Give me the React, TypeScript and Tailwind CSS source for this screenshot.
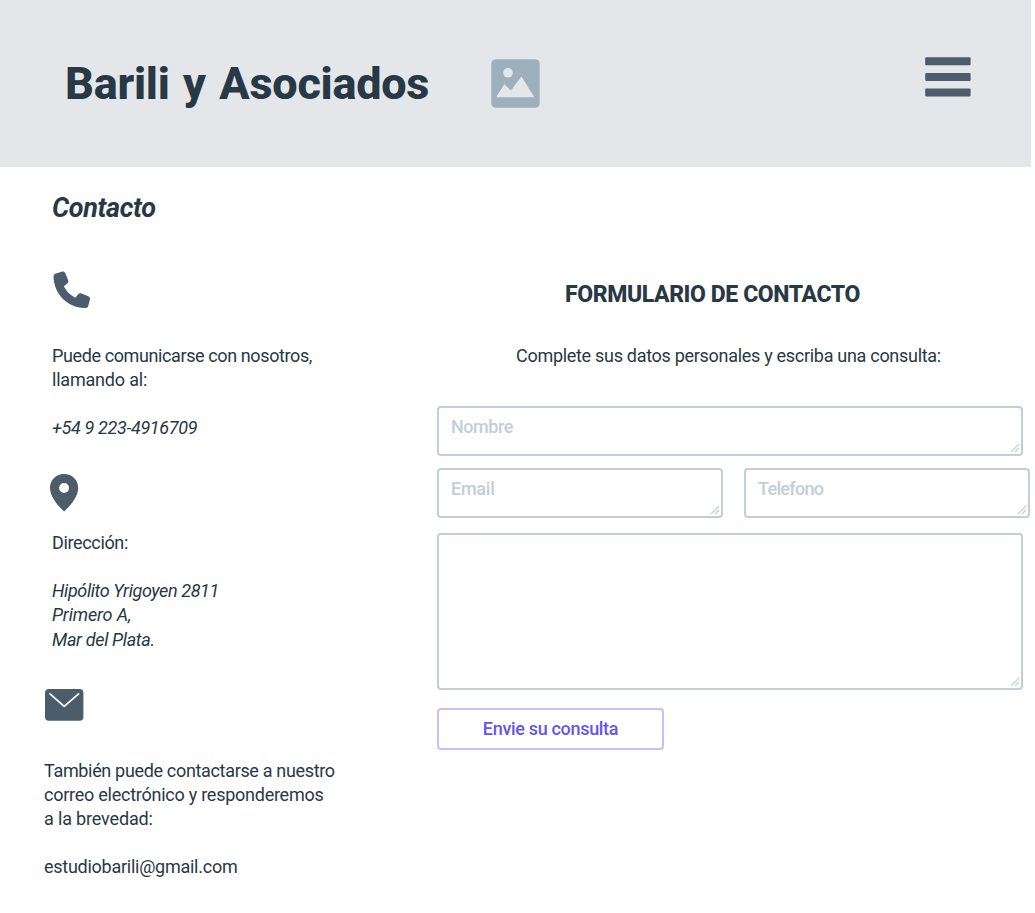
import type { ReactNode } from "react";

function Line({ className = "", children }: { className?: string; children: ReactNode }) {
  return <p className={`h-6 whitespace-nowrap text-[18px] leading-6 ${className}`}>{children}</p>;
}

function ImageIcon() {
  return (
    <svg className="block h-[49px] w-[49px]" viewBox="0 0 49 49">
      <rect x="0.3" y="0.3" width="48.4" height="48.4" rx="4.5" fill="#9fb0bd" />
      <circle cx="17" cy="13.8" r="4.8" fill="#e3e7ea" />
      <path d="M5.6 37.2 L13.4 25.2 L20 31.6 L30.4 17.6 L42.8 37.2 Q43 38.2 42 38.2 H6.4 Q5.3 38.2 5.6 37.2 Z" fill="#e3e7ea" />
    </svg>
  );
}

function MenuIcon() {
  return (
    <svg className="block h-10 w-[46px]" viewBox="0 0 46 40">
      <g fill="#4b5d6b">
        <rect x="0.2" y="0.3" width="45.4" height="8" rx="0.8" />
        <rect x="0.2" y="15.9" width="45.4" height="8" rx="0.8" />
        <rect x="0.2" y="31.4" width="45.4" height="8" rx="0.8" />
      </g>
    </svg>
  );
}

function PhoneIcon() {
  return (
    <svg className="block h-[37px] w-[38px]" viewBox="-8 -8 526 512">
      <path
        fill="#4b5d6b"
        transform="scale(0.985)"
        d="M164.9 24.6c-7.7-18.6-28-28.5-47.4-23.2l-88 24C12.1 30.2 0 46 0 64C0 311.4 200.6 512 448 512c18 0 33.8-12.1 38.6-29.5l24-88c5.3-19.4-4.6-39.7-23.2-47.4l-96-40c-16.3-6.8-35.2-2.1-46.3 11.6L304.7 368C234.3 334.7 177.3 277.7 144 207.3L193.3 167c13.7-11.2 18.4-30 11.6-46.3l-40-96z"
      />
    </svg>
  );
}

function PinIcon() {
  return (
    <svg className="block h-[38px] w-[29px]" viewBox="0 0 29 38">
      <path
        fill="#4b5d6b"
        fillRule="evenodd"
        d="M14.1 0 C6.1 0 0 6 0 13.7 C0 21.8 6.2 30 14.1 37.4 C22 30 28.2 21.8 28.2 13.7 C28.2 6 22.1 0 14.1 0 Z M14.1 9 a5 5 0 1 1 0 10 a5 5 0 1 1 0 -10 Z"
      />
    </svg>
  );
}

function MailIcon() {
  return (
    <svg className="block h-8 w-[39px]" viewBox="0 0 39 32">
      <rect x="0" y="0.1" width="38.4" height="31.6" rx="3.8" fill="#4b5d6b" />
      <path d="M5 4.8 L19.2 17.4 L33.6 4.8" fill="none" stroke="#fff" strokeWidth="1.7" strokeLinecap="round" strokeLinejoin="round" />
    </svg>
  );
}

function Field({ className = "", children }: { className?: string; children?: ReactNode }) {
  return (
    <div className={`relative rounded-[4px] border-2 border-[#c2ced9] bg-white pl-3 pt-[7px] font-medium text-[#c2ced9] ${className}`}>
      {children}
      <svg className="absolute right-[1px] bottom-[1px] h-[10px] w-[10px]" viewBox="0 0 10 10">
        <path d="M1 9 L9 1 M5 9 L9 5" stroke="#c2ced9" strokeWidth="1.2" />
      </svg>
    </div>
  );
}

export default function App() {
  return (
    <div className="h-[913px] w-full overflow-hidden bg-white font-['Roboto',sans-serif] font-[450] text-[#283845]">
      <header className="flex h-[167px] w-[1031px] items-start bg-[#e3e7ea] pl-[65px]">
        <h1 className="mt-[58px] w-[426px] whitespace-nowrap text-[45px] font-extrabold leading-[52px] tracking-[-0.25px] [word-spacing:2.5px]">
          Barili y Asociados
        </h1>
        <div className="mt-[59px]">
          <ImageIcon />
        </div>
        <div className="mt-[57px] mr-[60px] ml-auto">
          <MenuIcon />
        </div>
      </header>

      <main className="flex">
        <section className="w-[437px] shrink-0 pt-[25px] pl-[52px]">
          <h2 className="h-8 whitespace-nowrap text-[27px] font-bold italic leading-8 tracking-[-0.35px]">Contacto</h2>

          <div className="mt-[47px] ml-px">
            <PhoneIcon />
          </div>
          <div className="mt-9">
            <Line className="tracking-[-0.39px]">Puede comunicarse con nosotros,</Line>
            <Line className="tracking-[-0.2px]">llamando al:</Line>
            <Line className="mt-6 italic tracking-[-0.35px]">+54 9 223-4916709</Line>
          </div>

          <div className="mt-[34px] -ml-0.5">
            <PinIcon />
          </div>
          <div className="mt-[19px]">
            <Line className="tracking-[-0.35px]">Dirección:</Line>
            <Line className="mt-6 italic tracking-[-0.39px]">Hipólito Yrigoyen 2811</Line>
            <Line className="italic tracking-[-0.15px]">Primero A,</Line>
            <Line className="mt-px italic tracking-[-0.34px]">Mar del Plata.</Line>
          </div>

          <div className="mt-[37px] -ml-[7px]">
            <MailIcon />
          </div>
          <div className="mt-[38px] -ml-2">
            <Line className="tracking-[-0.33px]">También puede contactarse a nuestro</Line>
            <Line className="tracking-[-0.25px]">correo electrónico y responderemos</Line>
            <Line className="tracking-[-0.16px]">a la brevedad:</Line>
            <Line className="mt-6 tracking-[-0.26px]">estudiobarili@gmail.com</Line>
          </div>
        </section>

        <section className="w-[594px] shrink-0 pt-[114px]">
          <h2 className="h-7 pl-[128px] whitespace-nowrap text-[23px] font-extrabold leading-7 tracking-[-0.4px]">
            FORMULARIO DE CONTACTO
          </h2>
          <Line className="mt-[35px] pl-[79px] tracking-[-0.295px]">Complete sus datos personales y escriba una consulta:</Line>

          <div className="mt-[38px]">
            <Field className="h-[50px] w-[586px]">
              <Line className="tracking-[-0.45px]">Nombre</Line>
            </Field>
            <div className="mt-3 flex gap-[21px]">
              <Field className="h-[50px] w-[286px]">
                <Line className="tracking-[-0.25px]">Email</Line>
              </Field>
              <Field className="h-[50px] w-[286px]">
                <Line className="tracking-[-0.68px]">Telefono</Line>
              </Field>
            </div>
            <Field className="mt-[15px] h-[157px] w-[586px]" />
            <button className="mt-[18px] flex h-[42px] w-[227px] items-center justify-center rounded-[4px] border-2 border-[#c5bffc] bg-white font-medium text-[#6554f2]">
              <Line className="tracking-[-0.32px]">Envie su consulta</Line>
            </button>
          </div>
        </section>
      </main>
    </div>
  );
}
